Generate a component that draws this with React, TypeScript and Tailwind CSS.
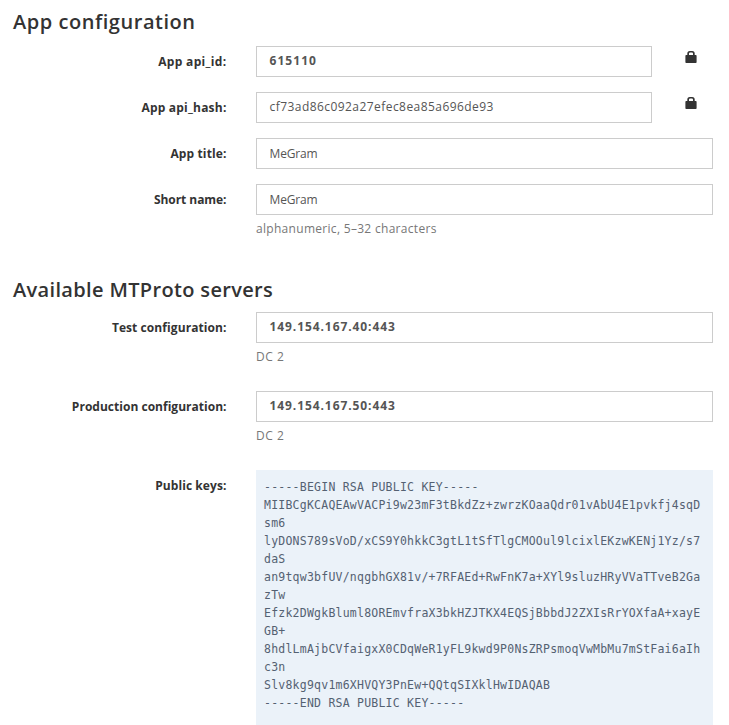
import type { ReactNode } from "react";

const KEY_LINES = [
  "-----BEGIN RSA PUBLIC KEY-----",
  "MIIBCgKCAQEAwVACPi9w23mF3tBkdZz+zwrzKOaaQdr01vAbU4E1pvkfj4sqD",
  "sm6",
  "lyDONS789sVoD/xCS9Y0hkkC3gtL1tSfTlgCMOOul9lcixlEKzwKENj1Yz/s7",
  "daS",
  "an9tqw3bfUV/nqgbhGX81v/+7RFAEd+RwFnK7a+XYl9sluzHRyVVaTTveB2Ga",
  "zTw",
  "Efzk2DWgkBluml8OREmvfraX3bkHZJTKX4EQSjBbbdJ2ZXIsRrYOXfaA+xayE",
  "GB+",
  "8hdlLmAjbCVfaigxX0CDqWeR1yFL9kwd9P0NsZRPsmoqVwMbMu7mStFai6aIh",
  "c3n",
  "Slv8kg9qv1m6XHVQY3PnEw+QQtqSIXklHwIDAQAB",
  "-----END RSA PUBLIC KEY-----",
];

function Lock() {
  return (
    <svg viewBox="0 0 12 12" className="ml-[33px] mt-[5px] h-3 w-3 shrink-0" fill="#333">
      <path
        fillRule="evenodd"
        d="M0.4 4.8Q0.4 4 1.2 4H2.3V2.6Q2.3 0 4.8 0H7.2Q9.7 0 9.7 2.6V4H10.8Q11.6 4 11.6 4.8V11.2Q11.6 12 10.8 12H1.2Q0.4 12 0.4 11.2ZM4 4H8V2.6Q8 1.4 6.9 1.4H5.1Q4 1.4 4 2.6Z"
      />
    </svg>
  );
}

function Row({ label, className, children }: { label: ReactNode; className: string; children: ReactNode }) {
  return (
    <div className={`flex items-start ${className}`}>
      <div className="w-[226.5px] shrink-0 pt-[7px] text-right font-bold leading-[18px] text-[#333]">{label}</div>
      <div className="ml-[29.5px] w-[457px]">{children}</div>
    </div>
  );
}

const BOX = "h-[31px] border border-[#ccc] bg-white pl-[12.5px] leading-[18px] whitespace-nowrap text-[#555]";

export default function App() {
  return (
    <main className="h-[725px] w-[729px] overflow-hidden bg-white font-['Open_Sans',sans-serif] text-[12px] text-[#333]">
      <h3 className="h-[46px] pl-[13px] pt-[9px] text-[20px] font-semibold leading-[26px]">
        <span className="tracking-[0.54px]">App configuration</span>
      </h3>
      <Row className="h-[46px]" label={<span className="tracking-[0.33px]">App api_id:</span>}>
        <div className="flex">
          <div className={`${BOX} w-[396px] pt-[5px]`}>
            <span className="font-bold tracking-[1.05px]">615110</span>
          </div>
          <Lock />
        </div>
      </Row>
      <Row className="h-[46px]" label={<span className="tracking-[0.2px]">App api_hash:</span>}>
        <div className="flex">
          <div className={`${BOX} w-[396px] pt-[5px]`}>
            <span className="tracking-[0.44px]">cf73ad86c092a27efec8ea85a696de93</span>
          </div>
          <Lock />
        </div>
      </Row>
      <Row className="h-[46px]" label={<span className="tracking-[0.12px]">App title:</span>}>
        <div className={`${BOX} pt-[6px]`}>
          <span className="tracking-[-0.15px]">MeGram</span>
        </div>
      </Row>
      <Row className="h-[82px]" label={<span className="tracking-[-0.05px]">Short name:</span>}>
        <div className={`${BOX} pt-[6px]`}>
          <span className="tracking-[-0.15px]">MeGram</span>
        </div>
        <p className="mt-[5px] leading-[18px] text-[#777]">
          <span className="tracking-[0.3px]">alphanumeric, 5–32 characters</span>
        </p>
      </Row>
      <h3 className="h-[46px] pl-[13px] pt-[11px] text-[20px] font-semibold leading-[26px]">
        <span className="tracking-[0.34px]">Available MTProto servers</span>
      </h3>
      <Row className="h-[79px]" label={<span className="tracking-[0.08px]">Test configuration:</span>}>
        <div className={`${BOX} pt-[5px]`}>
          <span className="font-bold tracking-[0.92px]">149.154.167.40:443</span>
        </div>
        <p className="mt-[5px] leading-[18px] tracking-[0.5px] text-[#777]">DC 2</p>
      </Row>
      <Row className="h-[79px]" label={<span className="tracking-[0.02px]">Production configuration:</span>}>
        <div className={`${BOX} pt-[5px]`}>
          <span className="font-bold tracking-[0.92px]">149.154.167.50:443</span>
        </div>
        <p className="mt-[5px] leading-[18px] tracking-[0.5px] text-[#777]">DC 2</p>
      </Row>
      <Row className="h-[255px]" label={<span className="tracking-[0.08px]">Public keys:</span>}>
        <pre className="h-[255px] bg-[#ebf2f9] pl-2 pt-2 font-['DejaVu_Sans_Mono',monospace] text-[11.5px] leading-[18px] tracking-[0.23px] text-[#546172]">
          {KEY_LINES.join("\n")}
        </pre>
      </Row>
    </main>
  );
}
